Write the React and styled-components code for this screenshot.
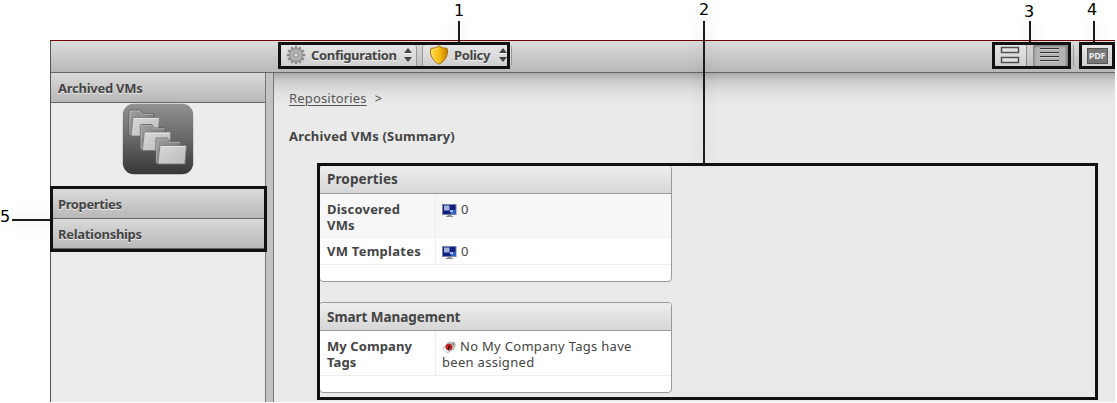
import React from 'react';
import styled, { createGlobalStyle } from 'styled-components';

const Global = createGlobalStyle`
  * { box-sizing: border-box; }
  html, body { margin: 0; background: #fff; overflow: hidden; }
  body { font: 13px/16px "Noto Sans", "Open Sans", sans-serif; color: #444; }
`;

const Page = styled.div`
  position: relative;
  width: 1117px;
  height: 403px;
  padding: 40px 2px 1px 50px;
  overflow: hidden;
`;

const Window = styled.div`
  height: 362px;
  display: flex;
  flex-direction: column;
  border-top: 1px solid #790000;
  border-left: 1px solid #555;
`;

const Toolbar = styled.header`
  height: 32px;
  flex: none;
  display: flex;
  align-items: center;
  padding: 0 2px 2px 229px;
  background: linear-gradient(#dcdcdc, #b8b8b8);
  border-bottom: 1px solid #666;
`;

const MenuButton = styled.button`
  width: ${(p) => p.$width}px;
  height: 22px;
  margin-right: 5px;
  padding: 0 4px 1px 6px;
  display: flex;
  align-items: center;
  font: bold 13px "Noto Sans", sans-serif;
  letter-spacing: ${(p) => p.$spacing || 0}px;
  color: #444;
  text-shadow: 0 1px #f4f4f4;
  background: linear-gradient(#e6e6e6, #cfcfcf);
  border: 1px solid #999;
  border-width: 0 1px 0 ${(p) => (p.$divided ? 1 : 0)}px;
  border-radius: 3px;
  svg:first-child { margin-right: 5px; flex: none; }
  svg:last-child { margin-left: auto; flex: none; }
`;

const Spacer = styled.div`
  flex: 1;
`;

const IconButton = styled.button`
  width: ${(p) => p.$width}px;
  height: 22px;
  padding: 0;
  display: grid;
  place-items: center;
  background: ${(p) => (p.$pressed ? '#b3b3b3' : 'linear-gradient(#e6e6e6, #cfcfcf)')};
  border: 0 solid #888;
  border-right-width: ${(p) => (p.$plain ? 0 : 1)}px;
  border-radius: 2px;
  box-shadow: ${(p) => (p.$pressed ? 'inset 1px 1px 3px #777, inset -1px 0 2px #888' : 'none')};
  margin-left: ${(p) => p.$gap || 0}px;
  svg { position: relative; left: -1px; top: -1px; }
`;

const Separator = styled.i`
  width: 1px;
  height: 21px;
  margin-left: 5px;
  background: #999;
`;

const Body = styled.div`
  flex: 1;
  min-height: 0;
  display: flex;
`;

const Sidebar = styled.aside`
  width: 215px;
  background: #ececec;
  border-right: 1px solid #777;
`;

const SideHeading = styled.h2`
  margin: 0;
  height: 30px;
  padding: 1px 7px 0;
  font: bold 13px/28px "Noto Sans", sans-serif;
  letter-spacing: ${(p) => p.$spacing || 0}px;
  text-shadow: 0 1px #eee;
  background: linear-gradient(#dadada, #b8b8b8);
  border-bottom: 1px solid #666;
`;

const Emblem = styled.div`
  height: 86px;
  padding-left: 71px;
`;

const Splitter = styled.div`
  width: 8px;
  background: #c2c2c2;
  border-right: 1px solid #777;
`;

const Content = styled.main`
  flex: 1;
  padding: 17px 0 0 15px;
  background:
    linear-gradient(rgba(0,0,0,.28), rgba(0,0,0,.13) 8px, rgba(0,0,0,.04) 20px, transparent 32px),
    #eaeaea;
`;

const Crumbs = styled.nav`
  height: 16px;
  letter-spacing: .17px;
  a { color: #555; text-decoration: underline; text-underline-offset: 2px; margin-right: 8px; }
`;

const Title = styled.h1`
  margin: 22px 0 21px;
  font: bold 13px/16px "Noto Sans", sans-serif;
  letter-spacing: .19px;
`;

const Panel = styled.section`
  width: 353px;
  height: ${(p) => p.$height}px;
  margin: 0 0 20px 30px;
  background: #fff;
  border: 1px solid #999;
  border-radius: 4px;
  overflow: hidden;
`;

const PanelTitle = styled.h3`
  margin: 0;
  height: 28px;
  padding: 0 7px;
  font: bold 13.5px/${(p) => p.$line || 28}px "Noto Sans", sans-serif;
  letter-spacing: ${(p) => p.$spacing || 0}px;
  background: linear-gradient(#eee, #d6d6d6);
  border-bottom: 1px solid #999;
`;

const Row = styled.div`
  display: grid;
  grid-template-columns: 116px 1fr;
  height: ${(p) => p.$height}px;
  background: ${(p) => (p.$shaded ? '#f7f7f7' : '#fff')};
  border-bottom: 1px solid #eee;
  > * { padding-top: ${(p) => p.$pad || 7}px; }
`;

const Label = styled.div`
  padding-left: 7px;
  font-weight: bold;
  letter-spacing: ${(p) => p.$spacing || 0}px;
  border-right: 1px solid #eee;
`;

const Value = styled.div`
  padding-left: 6px;
  letter-spacing: .3px;
  svg { vertical-align: -3px; margin-right: 4px; }
`;

const Outline = styled.div`
  position: absolute;
  left: ${(p) => p.$x}px;
  top: ${(p) => p.$y}px;
  width: ${(p) => p.$w}px;
  height: ${(p) => p.$h}px;
  border: 3px solid #111;
`;

const Leader = styled.div`
  position: absolute;
  left: ${(p) => p.$x}px;
  top: ${(p) => p.$y}px;
  width: ${(p) => p.$w || 2}px;
  height: ${(p) => p.$h || 2}px;
  background: #1c1c1f;
  box-shadow: 0 0 16px 1px rgba(0,0,0,.12);
`;

const Num = styled.span`
  position: absolute;
  left: ${(p) => p.$x}px;
  top: ${(p) => p.$y}px;
  font: 16px/18px "DejaVu Sans", sans-serif;
  color: #000;
`;

const Gear = () => (
  <svg width="20" height="20" viewBox="-10 -10 20 20">
    <g fill="#8b8b8b">
      {[0, 30, 60, 90, 120, 150].map((a) => (
        <rect key={a} x="-1.3" y="-9.2" width="2.6" height="18.4" rx=".6" transform={`rotate(${a})`} />
      ))}
    </g>
    <circle r="6.6" fill="#a6a6a6" stroke="#8d8d8d" strokeWidth=".8" />
    <circle r="4.2" fill="none" stroke="#bcbcbc" strokeWidth="1.2" />
    <circle r="2.2" fill="#e2e2e2" stroke="#808080" strokeWidth=".8" />
  </svg>
);

const Shield = () => (
  <svg width="20" height="20" viewBox="0 0 20 20">
    <defs>
      <linearGradient id="gold"><stop stopColor="#ffd84a" /><stop offset=".5" stopColor="#f5bd10" /><stop offset="1" stopColor="#c98200" /></linearGradient>
    </defs>
    <path d="M10 .8C8 2.6 5 3.4 2.2 3.1L1.4 6.2C1.6 12 5 16.6 10 19.2 15 16.6 18.4 12 18.6 6.2L17.8 3.1C15 3.4 12 2.6 10 .8Z" fill="url(#gold)" stroke="#9b6a10" />
    <path d="M10 2.4C8 4 5.6 4.6 3.2 4.5L2.7 6.5C3 11.3 5.8 15.2 10 17.7" fill="none" stroke="#ffe680" strokeWidth=".8" />
  </svg>
);

const Arrows = () => (
  <svg width="8" height="14" viewBox="0 0 8 14" fill="#444">
    <path d="M4 0 8 5H0ZM4 14 0 9H8Z" />
    <path d="M0 5h8v1H0z" fill="#f2f2f2" />
  </svg>
);

const Tiles = () => (
  <svg width="20" height="18" viewBox="0 0 20 18" fill="#e2e2e2" stroke="#505050" strokeWidth="1.5">
    <path d="M1.5 1.5h17v5h-17zM1.5 11.500h17v5h-17z" />
  </svg>
);

const Lines = () => (
  <svg width="20" height="15" viewBox="0 0 20 15">
    <path d="M1 1.500h19M1 5.500h19M1 9.500h19M1 13.500h19" stroke="#333" />
    <path d="M1 2.500h19M1 6.500h19M1 10.500h19M1 14.500h19" stroke="#ccc" />
  </svg>
);

const PdfBadge = styled.span`
  width: 21px;
  height: 16px;
  font: bold 9px/14px "Open Sans", sans-serif;
  letter-spacing: -.3px;
  text-align: center;
  color: #eee;
  background: #777;
  border: 1px solid #555;
`;

const Folder = ({ x, y }) => (
  <g transform={`translate(${x} ${y})`} stroke="#5c5c5c" strokeWidth=".8">
    <path d="M.5 26V1.500Q.5.500 1.500.500H12L14 4H25.500V8L6 26Z" fill="url(#back)" />
    <path d="M1.300 25V1.500H11.500L13.500 4.800H25" fill="none" stroke="#b5b5b5" />
    <path d="M4.500 8.200H31L29.500 26.500H2.500Z" fill="url(#front)" stroke="#777" />
    <path d="M5.200 9H30.200" stroke="#eee" />
  </g>
);

const Folders = () => (
  <svg width="72" height="72" viewBox="0 0 72 72">
    <defs>
      <linearGradient id="tile" x2="0" y2="1"><stop stopColor="#919191" /><stop offset=".5" stopColor="#676767" /><stop offset="1" stopColor="#373737" /></linearGradient>
      <linearGradient id="back" x2="1" y2="1"><stop stopColor="#a5a5a5" /><stop offset="1" stopColor="#626262" /></linearGradient>
      <linearGradient id="front" x2="1" y2="1"><stop stopColor="#d8d8d8" /><stop offset="1" stopColor="#bcbcbc" /></linearGradient>
    </defs>
    <rect x=".8" y=".8" width="70.400" height="70.400" rx="11" fill="url(#tile)" />
    <Folder x={6.5} y={6.5} /><Folder x={17.8} y={21} /><Folder x={33.4} y={34.5} />
  </svg>
);

const Monitor = () => (
  <svg width="15" height="13" viewBox="0 0 15 13">
    <rect x=".5" y=".5" width="13.500" height="10" fill="#10207e" stroke="#7885a8" />
    <path d="M2 1.500h5.500v5H2z" fill="#a5b0dd" />
    <path d="M8 6h3v2.500H8z" fill="#a0b6ef" /><path d="M11 6h2.500v4H9V9h2z" fill="#3265cc" />
    <path d="M5.500 11h4v1H11v1H4v-1h1.500z" fill="#888" />
  </svg>
);

const Tag = () => (
  <svg width="14" height="13" viewBox="0 0 14 13">
    <path d="M.5 7.500 6 1.500 12 1 13.500 4 12 8 5.500 11.800Z" fill="#bdbdbd" stroke="#aaa" strokeWidth=".7" />
    <path d="m1 7.500 3.500 4 2-1L2.500 6z" fill="#f3f3f3" />
    <circle cx="7" cy="6" r="3" fill="#e11b16" stroke="#8c1010" strokeWidth=".6" />
    <path d="M6 5h2v2H7v2H6z" fill="#222" /><circle cx="11.500" cy="3" r=".9" fill="#777" />
  </svg>
);

export default function App() {
  return (
    <Page>
      <Global />
      <Window>
        <Toolbar>
          <MenuButton $width={137} $spacing={-0.33}><Gear />Configuration<Arrows /></MenuButton>
          <MenuButton $width={90} $spacing={-0.35} $divided><Shield />Policy<Arrows /></MenuButton>
          <Spacer />
          <IconButton $width={32}><Tiles /></IconButton>
          <IconButton $width={35} $gap={6} $pressed><Lines /></IconButton>
          <Separator />
          <IconButton $width={32} $gap={7} $plain><PdfBadge>PDF</PdfBadge></IconButton>
        </Toolbar>
        <Body>
          <Sidebar>
            <SideHeading $spacing={-0.25}>Archived VMs</SideHeading>
            <Emblem><Folders /></Emblem>
            <SideHeading $spacing={-0.38}>Properties</SideHeading>
            <SideHeading $spacing={-0.3}>Relationships</SideHeading>
          </Sidebar>
          <Splitter />
          <Content>
            <Crumbs><a>Repositories</a>&gt;</Crumbs>
            <Title>Archived VMs (Summary)</Title>
            <Panel $height={117}>
              <PanelTitle $line={26} $spacing={0.1}>Properties</PanelTitle>
              <Row $height={44} $shaded><Label $spacing={0.2}>Discovered<br />VMs</Label><Value><Monitor />0</Value></Row>
              <Row $height={27} $pad={5}><Label $spacing={0.25}>VM Templates</Label><Value><Monitor />0</Value></Row>
            </Panel>
            <Panel $height={91}>
              <PanelTitle $spacing={-0.05}>Smart Management</PanelTitle>
              <Row $height={45}><Label $spacing={0.1}>My Company<br />Tags</Label><Value><Tag />No My Company Tags have<br />been assigned</Value></Row>
            </Panel>
          </Content>
        </Body>
      </Window>
      <Leader $x={458} $y={21} $h={22} />
      <Leader $x={703} $y={21} $h={143} />
      <Leader $x={1029} $y={21} $h={22} />
      <Leader $x={1093} $y={21} $h={22} />
      <Leader $x={12} $y={219} $w={40} />
      <Outline $x={278} $y={42} $w={232} $h={27} />
      <Outline $x={992} $y={42} $w={79} $h={27} />
      <Outline $x={1079} $y={42} $w={36} $h={27} />
      <Outline $x={50} $y={186} $w={217} $h={66} />
      <Outline $x={317} $y={163} $w={781} $h={237} />
      <Num $x={454} $y={2}>1</Num>
      <Num $x={699} $y={1}>2</Num>
      <Num $x={1024} $y={3}>3</Num>
      <Num $x={1087} $y={1}>4</Num>
      <Num $x={0} $y={208}>5</Num>
    </Page>
  );
}
